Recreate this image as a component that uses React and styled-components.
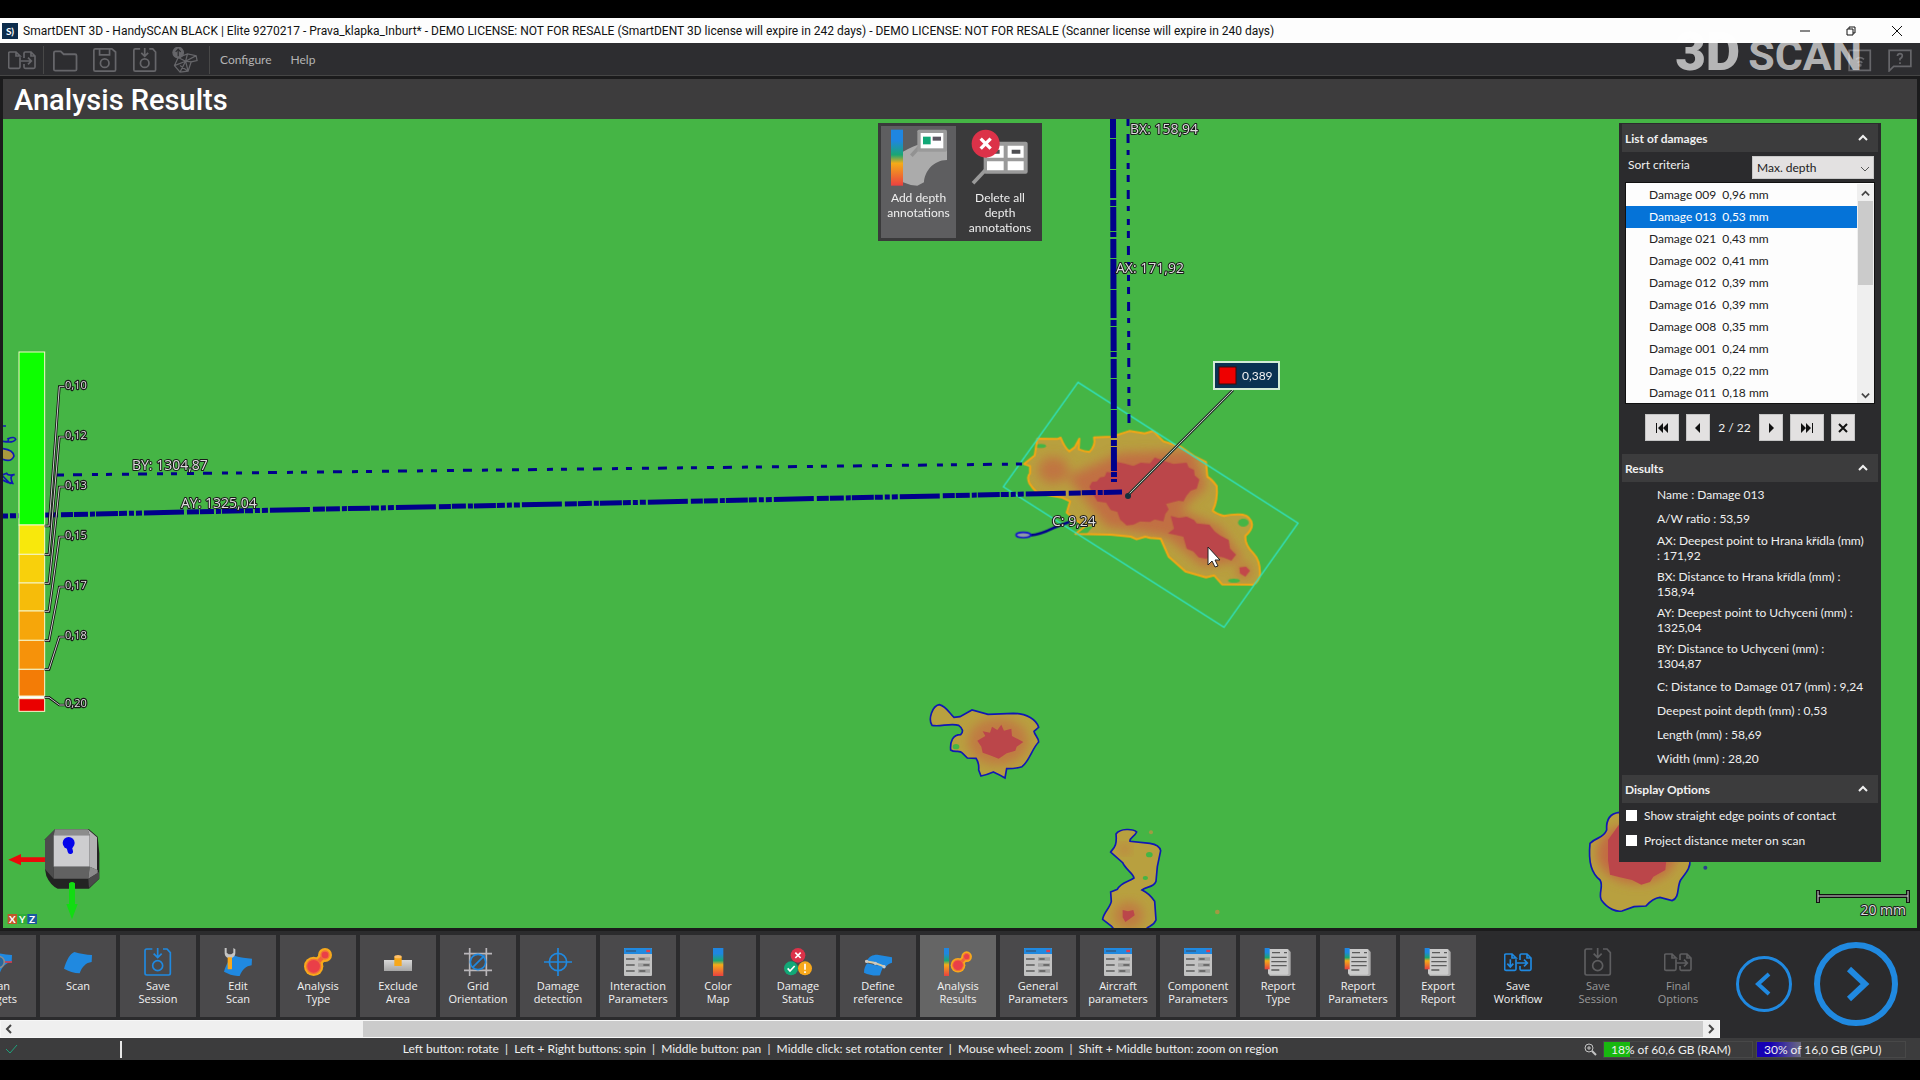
import React, { useState } from 'react';
import styled, { createGlobalStyle } from 'styled-components';

const GlobalStyle = createGlobalStyle`
  * {
    box-sizing: border-box;
  }
  html, body, #root {
    height: 100%;
  }
  body {
    margin: 0;
    background: #000;
    color: #f0f0f0;
    font-family: Lato, 'Open Sans', 'Liberation Sans', sans-serif;
    font-size: 12px;
  }
  button {
    font-family: inherit;
    border: 0;
    padding: 0;
    background: none;
    color: inherit;
  }
  ul {
    list-style: none;
    margin: 0;
    padding: 0;
  }
`;

const Window = styled.div`
  position: relative;
  display: flex;
  flex-direction: column;
  min-height: 100vh;
  padding: 18px 0 20px;
`;

/* ---------- title bar ---------- */

const TitleBar = styled.header`
  display: flex;
  align-items: center;
  height: 25px;
  padding-left: 2px;
  background: #fdfdfd;
  color: #111;
`;

const TitleText = styled.span`
  flex: 1;
  margin-left: 5px;
  font-family: Roboto, sans-serif;
  font-size: 12px;
  line-height: 16px;
  white-space: nowrap;
`;

const WindowButton = styled.button`
  display: grid;
  place-items: center;
  width: 46px;
  height: 25px;
`;

/* ---------- menu bar ---------- */

const MenuBar = styled.nav`
  display: flex;
  align-items: center;
  height: 33px;
  padding: 2px 5px 0 8px;
  background: #2d2d30;
  color: #b4b4b4;
  border-bottom: 1px solid #454545;
`;

const ToolButton = styled.button`
  display: grid;
  place-items: center;
  width: 28px;
  height: 28px;
  margin-right: ${(props) => props.$gap || 12}px;
`;

const Divider = styled.span`
  width: 1px;
  height: 28px;
  margin-right: ${(props) => props.$gap}px;
  background: #484848;
`;

const MenuItem = styled.button`
  margin-right: 19px;
  font-size: 12px;
  line-height: 16px;
`;

const Spacer = styled.span`
  flex: 1;
`;

const Watermark = styled.div`
  position: absolute;
  top: 27px;
  right: 58px;
  display: flex;
  align-items: baseline;
  gap: 8px;
  color: rgba(255, 255, 255, 0.65);
  font-family: Roboto, sans-serif;
  font-size: 43px;
  font-weight: 700;
  line-height: 50px;
  pointer-events: none;

  b {
    font-size: 53px;
    font-weight: 900;
  }
`;

/* ---------- main view ---------- */

const Main = styled.main`
  display: flex;
  flex: 1;
  flex-direction: column;
  padding: 3px 3px;
  background: #1b1b1c;
`;

const Heading = styled.h1`
  margin: 0;
  padding: 2px 11px 0;
  background: #3d3c3d;
  color: #fff;
  font-family: Roboto, sans-serif;
  font-size: 29px;
  font-weight: 500;
  line-height: 38px;
`;

const Viewport = styled.section`
  position: relative;
  display: flex;
  flex: 1;
  justify-content: flex-end;
  align-items: flex-start;
  padding: 4px 36px 20px;
  background: #45b545;
  overflow: hidden;
`;

const Scene = styled.svg`
  position: absolute;
  inset: 0;
  width: 100%;
  height: 100%;
`;

const Legend = styled.svg`
  position: absolute;
  left: 15px;
  top: 28%;
  margin-top: 4px;
`;

const Triad = styled.svg`
  position: absolute;
  left: 4px;
  bottom: 4px;
`;

const ScaleBar = styled.svg`
  position: absolute;
  right: 7px;
  bottom: 4px;
`;

const Tools = styled.div`
  position: absolute;
  top: 4px;
  left: 50%;
  display: flex;
  gap: 5px;
  margin-left: -82px;
  padding: 3px;
  background: #3a3a3b;
`;

const DepthTool = styled.button`
  display: flex;
  flex-direction: column;
  align-items: center;
  width: ${(props) => (props.$wide ? 78 : 75)}px;
  height: 112px;
  padding: 3px 4px;
  background: ${(props) => (props.$active ? '#5e5e60' : 'transparent')};
  font-size: 12px;
  line-height: 15px;

  svg {
    flex: none;
    margin-bottom: 3px;
  }
`;

const Callout = styled.g`
  rect:first-child {
    fill: #0a3252;
    stroke: #d3ecd6;
    stroke-width: 2;
  }
`;

/* ---------- side panel ---------- */

const Panel = styled.aside`
  position: relative;
  width: 262px;
  padding: 1px 3px 1px;
  background: #2b2b2d;
`;

const SectionTitle = styled.button`
  display: flex;
  align-items: center;
  justify-content: space-between;
  width: 100%;
  height: 28px;
  padding: 0 10px 0 3px;
  background: #3c3c3d;
  font-size: 12px;
  font-weight: 700;
`;

const SortRow = styled.div`
  display: flex;
  justify-content: space-between;
  padding: 4px 4px 3px 6px;
`;

const SortLabel = styled.label`
  line-height: 18px;
`;

const Picker = styled.span`
  position: relative;
  display: block;

  svg {
    position: absolute;
    right: 4px;
    top: 8px;
    pointer-events: none;
  }
`;

const Select = styled.select`
  width: 122px;
  height: 23px;
  padding: 0 4px;
  border: 1px solid #c8c8c8;
  border-radius: 0;
  background: #e3e1e1;
  color: #222;
  font-family: inherit;
  font-size: 12px;
  appearance: none;
`;

const ListBox = styled.div`
  display: flex;
  height: 222px;
  margin: 0 3px 10px;
  padding-top: 1px;
  background: #fdfdfd;
  border: 1px solid #111;
  overflow: hidden;
`;

const Damages = styled.ul`
  flex: 1;
  overflow: hidden;
`;

const DamageRow = styled.li`
  height: 22px;
  padding-left: 23px;
  background: ${(props) => (props.$selected ? '#0573d8' : 'transparent')};
  color: ${(props) => (props.$selected ? '#fff' : '#222')};
  line-height: 22px;
  cursor: default;

  span {
    margin-left: 6px;
  }
`;

const ListScroll = styled.div`
  display: flex;
  flex-direction: column;
  align-items: center;
  width: 17px;
  background: #efefef;

  button {
    width: 16px;
    height: 17px;
  }
  i {
    width: 15px;
    height: 84px;
    margin-bottom: auto;
    background: #cbcbcb;
  }
`;

const Pager = styled.div`
  display: flex;
  align-items: center;
  justify-content: center;
  gap: 7px;
  margin-bottom: 13px;

  span {
    width: 35px;
    text-align: center;
    white-space: nowrap;
  }
`;

const PagerButton = styled.button`
  display: grid;
  place-items: center;
  width: ${(props) => (props.$wide ? 34 : 24)}px;
  height: 27px;
  border: 1px solid #c4c4c4;
  background: #e3e1e1;
`;

const Results = styled.ul`
  margin-bottom: 5px;
  padding: 0 11px 0 35px;
`;

const Result = styled.li`
  display: flex;
  align-items: center;
  min-height: 24px;
  padding: 3px 0;
  line-height: 15px;
`;

const Options = styled.div`
  padding: 0 4px 8px;
`;

const Option = styled.label`
  display: flex;
  align-items: center;
  gap: 7px;
  height: 25px;

  input {
    width: 11px;
    height: 11px;
    margin: 0;
    background: #fff;
    appearance: none;
  }
  input:checked {
    box-shadow: inset 0 0 0 2px #fff;
    background: #0573d8;
  }
`;

/* ---------- workflow ---------- */

const Workflow = styled.footer`
  display: flex;
  justify-content: space-between;
  height: 107px;
  padding-right: 5px;
  background: #2b2b2d;
`;

const Steps = styled.div`
  display: flex;
  flex: 1;
  flex-direction: column;
  justify-content: space-between;
  max-width: 1720px;
  min-width: 0;
`;

const StepRow = styled.div`
  display: flex;
  gap: 4px;
  margin-left: -40px;
  padding-top: 4px;
`;

const Step = styled.button`
  display: flex;
  flex: none;
  flex-direction: column;
  align-items: center;
  width: 76px;
  height: 82px;
  padding-top: 13px;
  background: ${(props) => (props.$active ? '#656565' : props.$plain ? 'transparent' : '#4a494b')};
  color: ${(props) => (props.disabled ? '#9a9a9a' : '#f2f2f2')};
  font-family: 'Open Sans', sans-serif;
  font-size: 11px;
  line-height: 13px;
  white-space: pre-line;

  svg {
    flex: none;
    margin-bottom: 3px;
  }
`;

const StepScroll = styled.div`
  display: flex;
  align-items: center;
  height: 18px;
  border: 1px solid #f6f6f6;
  background: #efefef;

  button {
    display: grid;
    place-items: center;
    width: 16px;
    height: 16px;
  }
  i {
    flex: 1;
    height: 16px;
    margin-left: 346px;
    background: #cbcbcb;
  }
`;

const Paging = styled.div`
  display: flex;
  align-items: center;
  gap: 22px;
  padding: 0 17px 0 16px;
  height: 105px;
`;

const RoundButton = styled.button`
  display: grid;
  place-items: center;
  width: ${(props) => props.$size}px;
  height: ${(props) => props.$size}px;
  border: ${(props) => props.$ring}px solid #2089e0;
  border-radius: 50%;
`;

/* ---------- status bar ---------- */

const StatusBar = styled.div`
  display: flex;
  align-items: center;
  height: 22px;
  padding: 0 14px 0 5px;
  background: #3c3c3d;
`;

const Caret = styled.span`
  width: 2px;
  height: 17px;
  margin-left: 102px;
  background: #e8e8e8;
`;

const Hints = styled.p`
  flex: 1;
  margin: 0;
  padding-right: 24px;
  text-align: center;
  white-space: pre;
  line-height: 18px;
`;

const Meter = styled.span`
  width: 150px;
  height: 17px;
  margin-left: ${(props) => props.$gap}px;
  padding-left: 7px;
  border: 1px solid #484848;
  background: ${(props) => props.$fill} no-repeat;
  line-height: 15px;
  white-space: nowrap;
`;

/* ---------- icons ---------- */

const BLUE = '#2089e0';

const Icon = ({ size = 28, children, ...rest }) => (
  <svg width={size} height={size} viewBox='0 0 84 84' fill='none' aria-hidden='true' {...rest}>
    {children}
  </svg>
);

const HeatDefs = () => (
  <svg width='0' height='0' style={{ position: 'absolute' }} aria-hidden='true'>
    <defs>
      <linearGradient id='heat' x1='0' y1='0' x2='0' y2='1'>
        <stop offset='0.2' stopColor='#1f86e0' />
        <stop offset='0.45' stopColor='#1aa673' />
        <stop offset='0.6' stopColor='#f5ab18' />
        <stop offset='1' stopColor='#ea4040' />
      </linearGradient>
      <linearGradient id='metal' x1='0' y1='0' x2='0' y2='1'>
        <stop offset='0' stopColor='#d8d8d8' />
        <stop offset='1' stopColor='#a6a6a6' />
      </linearGradient>
    </defs>
  </svg>
);

const SHEET = 'M0 62 C7 38 17 18 31 12 C50 18 66 20 84 21 L83 42 C66 44 54 56 47 76 C30 76 14 70 0 62Z';

const ScanIcon = () => (
  <Icon>
    <path d={SHEET} fill={BLUE} />
  </Icon>
);

const TargetsIcon = () => (
  <Icon>
    <path d={SHEET} fill={BLUE} />
    <path d='M30 42 H84' stroke='#d83a4a' strokeWidth='5' />
    <circle cx='44' cy='42' r='17' fill='#28679c' stroke='#8c8c8c' strokeWidth='5' />
  </Icon>
);

const SaveSessionIcon = ({ color = BLUE, size, stroke = 5 }) => (
  <Icon size={size} stroke={color} strokeWidth={stroke}>
    <path d='M25 3 H8 Q3 3 3 8 V76 Q3 81 8 81 H74 Q79 81 79 76 V14 L69 3 H57' />
    <path d='M41 0 V27 M29 17 L41 29 L53 17' />
    <circle cx='41' cy='53' r='15' />
  </Icon>
);

const SaveIcon = ({ color }) => (
  <Icon size={24} stroke={color} strokeWidth='6'>
    <path d='M8 3 H66 L79 14 V76 Q79 81 74 81 H8 Q3 81 3 76 V8 Q3 3 8 3Z' />
    <path d='M23 3 V24 H58 V3' />
    <circle cx='41' cy='53' r='15' />
  </Icon>
);

const FolderIcon = ({ color }) => (
  <Icon size={25} stroke={color} strokeWidth='6'>
    <path d='M3 72 V16 Q3 11 8 11 H26 L36 21 H74 Q79 21 79 26 V72 Q79 76 74 76 H8 Q3 76 3 72Z' />
  </Icon>
);

const TransferIcon = ({ color, down, size }) => (
  <Icon size={size} stroke={color} strokeWidth='5'>
    <path d='M36 34 V63 Q36 67 32 67 H6 Q2 67 2 63 V22 Q2 18 6 18 H24 L36 30 H24 V18' />
    <path d='M48 36 V22 Q48 18 52 18 H69 L81 30 V63 Q81 67 77 67 H52 Q48 67 48 63 V54 M69 18 V30 H81' />
    <path d='M38 45 H69 M60 35 L70 45 L60 55' />
    {down && <path d='M19 34 V56 M10 47 L19 57 L28 47' />}
  </Icon>
);

const MeshIcon = ({ color }) => (
  <Icon size={26} stroke={color} strokeWidth='4'>
    <path d='M20 34 L50 22 L78 28 L81 44 L62 48 L52 78 L26 81 L8 60 Z M50 22 L44 46 L62 48 M44 46 L20 34 M44 46 L8 60 M44 46 L26 81 M44 46 L52 78 M78 28 L44 46 M26 60 L52 78' />
    <circle cx='20' cy='18' r='17' fill={color} />
    <path d='M20 30 V8 M12 16 L20 7 L28 16' stroke='#2d2d30' />
  </Icon>
);

const EditScanIcon = () => (
  <Icon>
    <g transform='translate(0 12) scale(1 0.95)'>
      <path d={SHEET} fill={BLUE} />
    </g>
    <path d='M2 0 V16 Q3 27 12 30 H23 Q33 27 34 16 V4 L28 0 V14 L22 19 H14 L8 14 V0 Z' fill='#c4c4c4' />
    <rect x='11' y='28' width='13' height='36' rx='2' fill='#f7a81c' />
  </Icon>
);

const Blob = () => (
  <>
    <path d='M30 54 L63 21' stroke='#f7a81c' strokeWidth='26' />
    <circle cx='29' cy='55' r='29' fill='#f7a81c' />
    <circle cx='63' cy='21' r='21' fill='#f7a81c' />
    <path d='M30 54 L63 21' stroke='#f0643a' strokeWidth='12' />
    <circle cx='29' cy='55' r='21' fill='#ea3f48' stroke='#f0703a' strokeWidth='4' />
    <circle cx='63' cy='21' r='12' fill='#ea3f48' stroke='#f0703a' strokeWidth='4' />
  </>
);

const AnalysisTypeIcon = () => (
  <Icon>
    <Blob />
  </Icon>
);

const AnalysisResultsIcon = () => (
  <Icon>
    <g transform='translate(20 10) scale(0.76)'>
      <Blob />
    </g>
    <rect width='15' height='84' fill='url(#heat)' />
  </Icon>
);

const ExcludeIcon = () => (
  <Icon>
    <rect y='36' width='84' height='33' fill='url(#metal)' />
    <rect x='31' y='26' width='22' height='28' fill='#f7a81c' />
    <ellipse cx='42' cy='26' rx='11' ry='5' fill='#ffc06a' />
  </Icon>
);

const GridIcon = () => (
  <Icon strokeWidth='5'>
    <path d='M17 0 V84 M67 0 V84 M0 17 H84 M0 67 H84' stroke='#b9b6ba' />
    <circle cx='42' cy='42' r='23' stroke={BLUE} />
    <path d='M26 58 L62 22' stroke={BLUE} />
  </Icon>
);

const DetectionIcon = () => (
  <Icon stroke={BLUE} strokeWidth='5'>
    <circle cx='42' cy='42' r='26' />
    <path d='M42 0 V84 M0 42 H84' />
  </Icon>
);

const FormIcon = () => (
  <Icon>
    <rect width='84' height='84' rx='3' fill='#c2c2c2' />
    <path d='M0 18 V3 Q0 0 3 0 H81 Q84 0 84 3 V18Z' fill={BLUE} />
    <path d='M6 9 H36' stroke='#35567c' strokeWidth='4' />
    <path d='M67 9 H78' stroke='#e03a4c' strokeWidth='7' />
    <path d='M42 33 H78 M42 51 H78 M42 69 H78' stroke='#a2a2a2' strokeWidth='11' />
    <path d='M6 33 H32 M6 51 H32 M6 69 H32 M46 33 H62 M58 51 H76 M46 69 H64' stroke='#5b5b5b' strokeWidth='4' />
  </Icon>
);

const ColorMapIcon = () => (
  <Icon>
    <rect x='27' width='31' height='84' fill='url(#heat)' />
  </Icon>
);

const StatusIcon = () => (
  <Icon stroke='#fff' strokeWidth='5'>
    <circle cx='42' cy='22' r='22' fill='#dc3249' stroke='none' />
    <circle cx='21' cy='61' r='21' fill='#12a877' stroke='none' />
    <circle cx='63' cy='61' r='21' fill='#f7a81c' stroke='none' />
    <path d='M34 14 L50 30 M50 14 L34 30' />
    <path d='M11 61 L18 69 L32 54' />
    <path d='M63 47 V65 M63 70 V75' />
  </Icon>
);

const ReferenceIcon = () => (
  <Icon>
    <path d='M8 38 C16 26 24 20 40 20 L84 28 V44 C76 46 66 52 62 62 Z' fill={BLUE} />
    <path d='M0 74 C0 62 4 52 10 46 L58 56 C54 64 50 74 48 82 C30 84 14 80 0 74Z' fill={BLUE} />
    <path d='M4 40 L30 44 L62 56' stroke='#d9c9a0' strokeWidth='6' />
    <g fill='#c8c8c8'>
      <circle cx='8' cy='40' r='5' />
      <circle cx='34' cy='46' r='5' />
      <circle cx='60' cy='56' r='5' />
    </g>
  </Icon>
);

const ReportIcon = () => (
  <Icon>
    <path d='M12 3 H72 L80 12 V79 Q80 84 75 84 H18 L12 77Z' fill='#adadad' />
    <path d='M12 3 H68 Q73 3 73 8 V76 Q73 80 69 80 H18 L12 74Z' fill='#cbcbcb' />
    <rect x='2' y='0' width='15' height='64' fill='url(#heat)' />
    <path d='M24 14 H48 M60 14 H69 M22 28 H68 M22 41 H68 M22 53 H68 M22 66 H46' stroke='#5b5b5b' strokeWidth='4' />
  </Icon>
);

const AddDepthIcon = () => (
  <svg width='58' height='58' viewBox='0 0 174 174' aria-hidden='true'>
    <rect x='3' y='2' width='36' height='168' fill='url(#heat)' />
    <path d='M39 68 C60 56 78 48 94 44 L171 62 V93 C128 94 104 128 102 160 L82 170 Q60 170 39 160Z' fill='#ababab' />
    <path d='M64 80 L90 52' stroke='#929292' strokeWidth='11' />
    <rect x='82' y='2' width='89' height='66' rx='5' fill='#9a9a9a' />
    <rect x='92' y='12' width='68' height='46' fill='#fff' />
    <rect x='99' y='23' width='23' height='23' fill='#12a877' />
    <rect x='128' y='23' width='25' height='12' fill='#5b5560' />
  </svg>
);

const DeleteDepthIcon = () => (
  <svg width='58' height='58' viewBox='0 0 174 174' aria-hidden='true'>
    <path d='M6 163 L44 122' stroke='#9a9a9a' strokeWidth='11' />
    <rect x='38' y='38' width='132' height='96' rx='6' fill='#9a9a9a' />
    <path d='M48 50 H98 V86 H48Z M110 50 H158 V86 H110Z M48 97 H98 V124 H48Z M110 97 H158 V124 H110Z' fill='#fff' />
    <path d='M72 62 H86 V74 H72Z M122 62 H148 V74 H122Z' fill='#4e4e52' />
    <circle cx='44' cy='44' r='42' fill='#dc3249' />
    <path d='M29 29 L59 59 M59 29 L29 59' stroke='#fff' strokeWidth='10' />
  </svg>
);

const Chevron = ({ d, size = 10, color = '#444', width = 2 }) => (
  <svg width={size} height={size} viewBox='0 0 10 10' fill='none' stroke={color} strokeWidth={width} aria-hidden='true'>
    <path d={d} />
  </svg>
);

const UP = 'M1 7 L5 3 L9 7';
const DOWN = 'M1 3 L5 7 L9 3';
const LEFT = 'M7 1 L3 5 L7 9';
const RIGHT = 'M3 1 L7 5 L3 9';

const Glyph = ({ d }) => (
  <svg width='14' height='10' viewBox='0 0 14 10' fill='#111' aria-hidden='true'>
    <path d={d} />
  </svg>
);

/* ---------- scan view ---------- */

const Label = styled.text`
  fill: #dedede;
  stroke: #1a1a1a;
  stroke-width: 2px;
  stroke-linejoin: round;
  paint-order: stroke;
  font-family: 'Open Sans', sans-serif;
  font-size: ${(props) => props.$size || 14}px;
`;

const MAIN_OUTLINE =
  'M352 236 L412 237 L422 233 Q434 264 448 274 L464 262 L478 236 L476 268 Q492 274 508 276 Q528 256 522 232 L576 230 L628 213 L674 220 L700 213 Q716 230 730 244 L782 260 L822 288 L858 306 L862 350 Q874 356 890 378 Q894 420 878 452 Q890 462 912 468 Q940 462 968 464 Q992 468 996 494 Q996 510 976 528 Q974 554 1000 580 Q1020 600 1020 640 Q1018 664 1000 674 L906 673 L882 646 L858 652 L796 634 L746 590 L722 536 L690 534 L676 530 L650 538 L632 530 L572 524 L466 522 L494 500 L440 458 L450 424 L424 412 L366 402 Q350 404 328 370 Q320 350 330 340 L330 318 L312 312 L344 286 Z';

const SECOND_OUTLINE =
  'M118 74 C96 78 84 118 96 136 C120 142 150 128 176 136 C190 146 190 156 182 164 C158 164 150 184 152 210 C166 220 178 208 188 220 L202 234 L228 235 Q238 250 236 270 L243 288 Q262 284 280 276 Q298 284 315 294 L320 266 Q350 266 366 260 C388 244 396 206 416 186 C416 172 404 166 402 154 L416 142 C410 120 380 100 340 100 L264 103 L216 90 L180 110 L162 112 C148 100 140 80 118 74Z';

const THIRD_OUTLINE =
  'M648 462 C660 444 700 446 710 456 C704 470 688 472 690 484 L750 490 Q778 494 782 512 L772 560 L768 604 C760 624 740 618 726 630 Q748 640 764 664 L768 720 C760 740 744 738 738 748 L642 748 L634 738 L608 718 C610 698 630 684 634 664 L632 636 L652 628 C664 606 686 606 702 594 C700 580 676 568 668 548 L632 516 C640 504 652 500 648 462Z';

const FOURTH_OUTLINE =
  'M58 1087 C30 1090 18 1110 20 1140 C10 1166 -10 1160 -30 1180 C-36 1240 -24 1270 0 1290 C12 1310 -6 1330 4 1350 C24 1378 50 1386 66 1383 L102 1370 L138 1368 C150 1354 164 1344 180 1342 L216 1352 C240 1344 230 1310 242 1290 C256 1270 272 1256 270 1230 L262 1160 C230 1110 200 1090 150 1090 Z';

const ScanView = () => (
  <Scene viewBox='3 119 1914 809' preserveAspectRatio='xMidYMid slice' role='img' aria-label='Scan with depth map'>
    <defs>
      <filter id='soft' x='-30%' y='-30%' width='160%' height='160%'>
        <feGaussianBlur stdDeviation='16' />
      </filter>
      <clipPath id='mainClip'>
        <path d={MAIN_OUTLINE} />
      </clipPath>
      <clipPath id='secondClip'>
        <path d={SECOND_OUTLINE} />
      </clipPath>
      <clipPath id='thirdClip'>
        <path d={THIRD_OUTLINE} />
      </clipPath>
      <clipPath id='fourthClip'>
        <path d={FOURTH_OUTLINE} />
      </clipPath>
    </defs>

    {/* main damage */}
    <g transform='translate(920 360) scale(0.33333)'>
      <g clipPath='url(#mainClip)'>
        <path d={MAIN_OUTLINE} fill='#b8a03f' />
        <g filter='url(#soft)' fill='#c26a42'>
          <ellipse cx='400' cy='330' rx='46' ry='40' opacity='0.8' />
          <path d='M440 350 L600 280 L820 270 L860 380 L780 450 L900 500 L970 600 L850 620 L740 530 L560 500Z' opacity='0.9' />
          <circle cx='972' cy='634' r='20' />
        </g>
        <g fill='#44b545'>
          <ellipse cx='970' cy='488' rx='16' ry='12' />
          <ellipse cx='942' cy='662' rx='18' ry='6' />
          <ellipse cx='362' cy='258' rx='16' ry='6' />
          <path d='M476 505 L520 498 L500 522 H470Z' />
        </g>
        <path
          d='M508 380 L516 366 L530 364 L540 352 L554 350 L560 336 L576 338 L574 318 L590 306 L612 310 L640 318 L662 308 L690 310 L704 292 L736 304 L760 312 L800 308 L806 322 L822 330 L824 346 L838 358 L830 386 L812 392 L800 406 L790 424 L776 422 L738 432 L746 448 L736 462 L730 484 L704 478 L690 486 L660 484 L640 494 L620 496 L600 478 L592 456 L572 450 L558 428 L532 424 L520 404Z'
          fill='#bb464a'
        />
        <path
          d='M752 468 L776 474 L800 470 L822 480 L830 490 L868 494 L884 514 L900 526 L926 540 L930 566 L948 584 L934 602 L910 592 L880 586 L858 596 L836 592 L820 574 L800 566 L790 530 L764 524 L744 520 L762 506Z'
          fill='#bb464a'
        />
        <path d='M958 622 L978 620 L990 632 L976 650 L960 640Z' fill='#c2484a' />
      </g>
      <path d={MAIN_OUTLINE} fill='none' stroke='#f5a614' strokeWidth='6' strokeLinejoin='round' />
      <path d='M474 67 L1134 489 L912 802 L250 380 Z' fill='none' stroke='#2fe3c3' strokeWidth='4' />
      <path d='M330 526 Q360 524 400 504 L448 486' fill='none' stroke='#00008b' strokeWidth='8' />
      <ellipse cx='310' cy='525' rx='22' ry='8' fill='#8f9ba6' stroke='#1414cc' strokeWidth='5' />
    </g>

    {/* neighbouring damages */}
    <g transform='translate(900 680) scale(0.33333)'>
      <g clipPath='url(#secondClip)'>
        <path d={SECOND_OUTLINE} fill='#b8a03f' />
        <ellipse cx='294' cy='184' rx='90' ry='70' fill='#c07a42' filter='url(#soft)' />
        <ellipse cx='168' cy='200' rx='10' ry='8' fill='#44b545' />
        <path
          d='M232 182 L256 168 L248 154 L270 158 L276 140 L292 150 L304 134 L312 152 L334 146 L336 168 L370 186 L350 200 L346 212 L320 220 L296 236 L270 226 L248 218 L244 200Z'
          fill='#bb464a'
        />
      </g>
      <path d={SECOND_OUTLINE} fill='none' stroke='#1018b4' strokeWidth='5' />
      <g clipPath='url(#thirdClip)'>
        <path d={THIRD_OUTLINE} fill='#b8a03f' />
        <ellipse cx='674' cy='508' rx='16' ry='14' fill='#c07a42' filter='url(#soft)' />
        <ellipse cx='686' cy='706' rx='44' ry='40' fill='#c07a42' filter='url(#soft)' />
        <path d='M668 690 L684 694 L700 690 L704 706 L690 716 L676 726 L668 712Z' fill='#bb464a' />
        <ellipse cx='748' cy='524' rx='10' ry='8' fill='#44b545' />
        <ellipse cx='736' cy='594' rx='8' ry='6' fill='#44b545' />
      </g>
      <path d={THIRD_OUTLINE} fill='none' stroke='#1018b4' strokeWidth='5' />
      <circle cx='753' cy='457' r='6' fill='#a09a42' />
      <circle cx='952' cy='696' r='7' fill='#a09a42' />
    </g>
    <g transform='translate(1600 450) scale(0.33333)'>
      <g clipPath='url(#fourthClip)'>
        <path d={FOURTH_OUTLINE} fill='#b8a03f' />
        <ellipse cx='110' cy='1210' rx='120' ry='90' fill='#c26a42' filter='url(#soft)' />
        <path
          d='M24 1170 L60 1120 L180 1120 L200 1220 L196 1260 L160 1280 L150 1296 L124 1304 L96 1290 L60 1282 L30 1274 L24 1230Z'
          fill='#bb464a'
        />
      </g>
      <path d={FOURTH_OUTLINE} fill='none' stroke='#1018b4' strokeWidth='5' />
      <circle cx='316' cy='1253' r='6' fill='#2a3d90' />
    </g>

    {/* loose contours at the left edge */}
    <g transform='translate(0 330) scale(0.33333)' fill='none' stroke='#1018b4' strokeWidth='5'>
      <path d='M8 288 H18 M8 334 Q40 340 47 328 Q44 318 24 326 Q30 338 8 334' />
      <path d='M8 356 Q40 360 42 378 Q34 398 8 388' fill='#a89a3e' />
      <path d='M8 434 L20 430 Q24 438 44 434 Q26 436 38 460 Q20 458 8 450 M8 438 L32 462' />
    </g>

    {/* distance lines */}
    <g stroke='#00008b'>
      <path d='M1113 119 L1114 482' strokeWidth='6' strokeDasharray='19 1 30 1 28 2 6 1 24 1 5 2' />
      <path d='M1128 119 L1129 430' strokeWidth='3' strokeDasharray='7 8 9 7 5 8 6 6' />
      <path d='M3 516 L1122 492' strokeWidth='5' strokeDasharray='5 2 6 2 40 3 12 1 14 2 5 1 22 1 8 2' />
      <path d='M57 475 L1022 464' strokeWidth='3' strokeDasharray='7 9 9 10 6 8 6 10' />
    </g>

    <Label x='1130' y='134'>BX: 158,94</Label>
    <Label x='1116' y='273'>AX: 171,92</Label>
    <Label x='132' y='470'>BY: 1304,87</Label>
    <Label x='181' y='508'>AY: 1325,04</Label>
    <Label x='1052' y='526'>C: 9,24</Label>

    {/* depth annotation */}
    <path d='M1233 390 L1128 495' stroke='#2c3c34' strokeWidth='3' />
    <path d='M1233 390 L1128 495' stroke='#b9c4b4' strokeWidth='1' />
    <circle cx='1128' cy='496' r='3' fill='#14303c' />
    <Callout>
      <rect x='1214' y='362' width='65' height='27' />
      <rect x='1219' y='367' width='17' height='17' fill='#ee0000' stroke='#3c0a0a' />
      <text x='1242' y='380' fontSize='12' fill='#f2f2f2'>0,389</text>
    </Callout>

    <path d='M1208 547 V565 L1212 561 L1215 567 L1218 566 L1215 560 H1220 Z' fill='#fff' stroke='#222' strokeWidth='1' />
  </Scene>
);

const legendBands = [
  { y: 66, h: 519, color: '#0dff00' },
  { y: 585, h: 88, color: '#f8e80c' },
  { y: 673, h: 86, color: '#f8d00c' },
  { y: 759, h: 84, color: '#f6bc0a' },
  { y: 843, h: 88, color: '#f6a60a' },
  { y: 931, h: 87, color: '#f6920a' },
  { y: 1018, h: 80, color: '#f37c06' },
  { y: 1106, h: 38, color: '#ea0000' },
];

const legendMarks = [
  { from: 588, to: 170, text: '0,10' },
  { from: 674, to: 321, text: '0,12' },
  { from: 760, to: 471, text: '0,13' },
  { from: 844, to: 621, text: '0,15' },
  { from: 932, to: 771, text: '0,17' },
  { from: 1018, to: 921, text: '0,18' },
  { from: 1102, to: 1125, text: '0,20' },
];

const DepthLegend = () => (
  <Legend width='76' height='366' viewBox='54 60 228 1098' role='img' aria-label='Depth legend'>
    <rect x='57' y='66' width='77' height='1078' fill='#fff' />
    {legendBands.map((band) => (
      <rect key={band.y} x='57' y={band.y} width='77' height={band.h} fill={band.color} stroke='#f3f6c8' strokeWidth='3' />
    ))}
    {legendMarks.map((mark) => {
      const d = `M134 ${mark.from} H147 L178 ${mark.to} H194`;
      return (
        <g key={mark.text} fill='none'>
          <path d={d} stroke='#111' strokeWidth='8' />
          <path d={d} stroke='#ccc' strokeWidth='3' />
        </g>
      );
    })}
    {legendMarks.map((mark) => (
      <Label key={mark.text} x='195' y={mark.to + 7} $size={33} style={{ strokeWidth: 7 }}>
        {mark.text}
      </Label>
    ))}
  </Legend>
);

const AxisTriad = () => (
  <Triad width='98' height='96' viewBox='20 54 294 288' role='img' aria-label='Orientation'>
    <path d='M136 142 H62 V132 L24 149 L62 166 V156 H136Z' fill='#ea0a0a' />
    <path d='M164 58 H266 L292 80 L297 130 V206 L266 236 H172 Q150 226 138 198 L134 178 V88Z' fill='#232323' />
    <path d='M164 58 L134 88 V178 L160 206 V76Z' fill='#4c4c4c' />
    <path d='M164 58 H262 L268 76 H160Z' fill='#8c8c8c' />
    <path d='M160 76 H268 V170 H160Z' fill='#cdcdcf' />
    <path d='M262 58 L290 82 V180 L268 170 V76Z' fill='#b2b2b4' />
    <path d='M160 170 H268 L264 206 H160Z' fill='#626262' />
    <path d='M268 170 L292 180 V190 L264 206Z' fill='#8a8a8a' />
    <path d='M264 206 L296 186 V206 L266 234Z' fill='#4a4a4a' />
    <circle cx='205' cy='99' r='18' fill='#0505ea' />
    <path d='M205 105 L210 124' stroke='#0505ea' strokeWidth='16' strokeLinecap='round' />
    <path d='M206 220 Q215 212 224 220 V282 H232 L215 328 L198 282 H206Z' fill='#12dc12' />
    <rect x='22' y='312' width='28' height='30' fill='#c0562a' />
    <rect x='52' y='312' width='28' height='30' fill='#2fae38' />
    <rect x='81' y='312' width='29' height='30' fill='#1b5a9e' />
    <g fill='#fff' fontSize='30' fontWeight='700' textAnchor='middle'>
      <text x='36' y='338'>X</text>
      <text x='66' y='338'>Y</text>
      <text x='95' y='338'>Z</text>
    </g>
  </Triad>
);

const DistanceScale = () => (
  <ScaleBar width='96' height='34' viewBox='0 0 96 34'>
    <path d='M4 0 V13 M94 0 V13 M4 6 H94' stroke='#111' strokeWidth='4' />
    <path d='M4 1 V12 M94 1 V12 M4 6 H94' stroke='#ddd' strokeWidth='1' />
    <Label x='92' y='25' textAnchor='end'>20 mm</Label>
  </ScaleBar>
);

/* ---------- data ---------- */

const damages = [
  ['Damage 009', '0,96 mm'],
  ['Damage 013', '0,53 mm'],
  ['Damage 021', '0,43 mm'],
  ['Damage 002', '0,41 mm'],
  ['Damage 012', '0,39 mm'],
  ['Damage 016', '0,39 mm'],
  ['Damage 008', '0,35 mm'],
  ['Damage 001', '0,24 mm'],
  ['Damage 015', '0,22 mm'],
  ['Damage 011', '0,18 mm'],
];

const results = [
  'Name : Damage 013',
  'A/W ratio : 53,59',
  'AX: Deepest point to Hrana křídla (mm) : 171,92',
  'BX: Distance to Hrana křídla (mm) : 158,94',
  'AY: Deepest point to Uchyceni (mm) : 1325,04',
  'BY: Distance to Uchyceni (mm) : 1304,87',
  'C: Distance to Damage 017 (mm) : 9,24',
  'Deepest point depth (mm) : 0,53',
  'Length (mm) : 58,69',
  'Width (mm) : 28,20',
];

const steps = [
  { label: 'Scan\nTargets', icon: <TargetsIcon /> },
  { label: 'Scan', icon: <ScanIcon /> },
  { label: 'Save\nSession', icon: <SaveSessionIcon /> },
  { label: 'Edit\nScan', icon: <EditScanIcon /> },
  { label: 'Analysis\nType', icon: <AnalysisTypeIcon /> },
  { label: 'Exclude\nArea', icon: <ExcludeIcon /> },
  { label: 'Grid\nOrientation', icon: <GridIcon /> },
  { label: 'Damage\ndetection', icon: <DetectionIcon /> },
  { label: 'Interaction\nParameters', icon: <FormIcon /> },
  { label: 'Color\nMap', icon: <ColorMapIcon /> },
  { label: 'Damage\nStatus', icon: <StatusIcon /> },
  { label: 'Define\nreference', icon: <ReferenceIcon /> },
  { label: 'Analysis\nResults', icon: <AnalysisResultsIcon />, active: true },
  { label: 'General\nParameters', icon: <FormIcon /> },
  { label: 'Aircraft\nparameters', icon: <FormIcon /> },
  { label: 'Component\nParameters', icon: <FormIcon /> },
  { label: 'Report\nType', icon: <ReportIcon /> },
  { label: 'Report\nParameters', icon: <ReportIcon /> },
  { label: 'Export\nReport', icon: <ReportIcon /> },
  { label: 'Save\nWorkflow', icon: <TransferIcon color={BLUE} down />, plain: true },
  { label: 'Save\nSession', icon: <SaveSessionIcon color='#5e5e60' />, plain: true, disabled: true },
  { label: 'Final\nOptions', icon: <TransferIcon color='#5e5e60' />, plain: true, disabled: true },
];

const Section = ({ title }) => (
  <SectionTitle>
    {title}
    <Chevron d={UP} color='#f0f0f0' />
  </SectionTitle>
);

export default function App() {
  const [selected, setSelected] = useState('Damage 013');
  const dim = '#66666a';

  return (
    <>
      <GlobalStyle />
      <HeatDefs />
      <Window>
        <TitleBar>
          <svg width='16' height='16' viewBox='0 0 16 16' aria-hidden='true'>
            <rect width='16' height='16' fill='#0c2c4c' />
            <text x='8' y='12' textAnchor='middle' fontSize='10' fontWeight='700' fill='#fff'>S)</text>
          </svg>
          <TitleText>
            SmartDENT 3D - HandySCAN BLACK | Elite 9270217 - Prava_klapka_Inburt* - DEMO LICENSE: NOT FOR RESALE (SmartDENT
            3D license will expire in 242 days) - DEMO LICENSE: NOT FOR RESALE (Scanner license will expire in 240 days)
          </TitleText>
          <WindowButton aria-label='Minimize'>
            <Chevron d='M0 5 H10' color='#111' width={1} />
          </WindowButton>
          <WindowButton aria-label='Restore'>
            <Chevron d='M1 3 H7 V9 H1Z M3 3 V1 H9 V7 H7' color='#111' width={1} />
          </WindowButton>
          <WindowButton aria-label='Close'>
            <Chevron d='M0 0 L10 10 M10 0 L0 10' color='#111' width={1} />
          </WindowButton>
        </TitleBar>

        <MenuBar>
          <ToolButton aria-label='Workflow' $gap={7}>
            <TransferIcon color={dim} />
          </ToolButton>
          <Divider $gap={7} />
          <ToolButton aria-label='Open'>
            <FolderIcon color={dim} />
          </ToolButton>
          <ToolButton aria-label='Save'>
            <SaveIcon color={dim} />
          </ToolButton>
          <ToolButton aria-label='Save session'>
            <SaveSessionIcon color={dim} size={24} stroke={6} />
          </ToolButton>
          <ToolButton aria-label='Export mesh' $gap={10}>
            <MeshIcon color={dim} />
          </ToolButton>
          <Divider $gap={10} />
          <MenuItem>Configure</MenuItem>
          <MenuItem>Help</MenuItem>
          <Spacer />
          <ToolButton aria-label='Connection'>
            <Icon size={24} stroke={dim} strokeWidth='6'>
              <path d='M4 8 H78 V78 H4Z' />
              <path d='M28 40 Q42 28 56 40 M34 52 Q42 44 50 52' />
              <circle cx='42' cy='60' r='3' />
            </Icon>
          </ToolButton>
          <ToolButton aria-label='Help' $gap={1}>
            <Icon size={24} stroke={dim} strokeWidth='6'>
              <path d='M4 80 V8 H80 V64 H20 Z' />
              <path d='M33 28 Q34 20 42 20 Q51 20 50 28 Q49 34 42 38 V44 M42 50 V56' />
            </Icon>
          </ToolButton>
        </MenuBar>

        <Main>
          <Heading>Analysis Results</Heading>
          <Viewport>
            <ScanView />
            <DepthLegend />
            <AxisTriad />
            <DistanceScale />

            <Tools>
              <DepthTool $active>
                <AddDepthIcon />
                Add depth annotations
              </DepthTool>
              <DepthTool $wide>
                <DeleteDepthIcon />
                Delete all depth annotations
              </DepthTool>
            </Tools>

            <Panel>
              <Section title='List of damages' />
              <SortRow>
                <SortLabel htmlFor='sort'>Sort criteria</SortLabel>
                <Picker>
                  <Select id='sort' defaultValue='depth'>
                    <option value='depth'>Max. depth</option>
                  </Select>
                  <Chevron d={DOWN} color='#555' width={1} />
                </Picker>
              </SortRow>
              <ListBox>
                <Damages role='listbox' aria-label='Damages'>
                  {damages.map(([name, depth]) => (
                    <DamageRow
                      key={name}
                      role='option'
                      aria-selected={name === selected}
                      $selected={name === selected}
                      onClick={() => setSelected(name)}
                    >
                      {name}
                      <span>{depth}</span>
                    </DamageRow>
                  ))}
                </Damages>
                <ListScroll>
                  <button aria-label='Scroll up'>
                    <Chevron d={UP} size={9} />
                  </button>
                  <i />
                  <button aria-label='Scroll down'>
                    <Chevron d={DOWN} size={9} />
                  </button>
                </ListScroll>
              </ListBox>
              <Pager>
                <PagerButton $wide aria-label='First'>
                  <Glyph d='M1 0 H2 V10 H1Z M8 0 V10 L3 5Z M13 0 V10 L8 5Z' />
                </PagerButton>
                <PagerButton aria-label='Previous'>
                  <Glyph d='M9 0 V10 L4 5Z' />
                </PagerButton>
                <span>2 / 22</span>
                <PagerButton aria-label='Next'>
                  <Glyph d='M5 0 V10 L10 5Z' />
                </PagerButton>
                <PagerButton $wide aria-label='Last'>
                  <Glyph d='M12 0 H13 V10 H12Z M1 0 V10 L6 5Z M6 0 V10 L11 5Z' />
                </PagerButton>
                <PagerButton aria-label='Remove'>
                  <Chevron d='M1 1 L9 9 M9 1 L1 9' color='#111' />
                </PagerButton>
              </Pager>

              <Section title='Results' />
              <Results>
                {results.map((line) => (
                  <Result key={line}>{line}</Result>
                ))}
              </Results>

              <Section title='Display Options' />
              <Options>
                <Option>
                  <input type='checkbox' />
                  Show straight edge points of contact
                </Option>
                <Option>
                  <input type='checkbox' />
                  Project distance meter on scan
                </Option>
              </Options>
            </Panel>
          </Viewport>
        </Main>

        <Workflow>
          <Steps>
            <StepRow>
              {steps.map((step, i) => (
                <Step key={i} $active={step.active} $plain={step.plain} disabled={step.disabled}>
                  {step.icon}
                  {step.label}
                </Step>
              ))}
            </StepRow>
            <StepScroll>
              <button aria-label='Scroll left'>
                <Chevron d={LEFT} />
              </button>
              <i />
              <button aria-label='Scroll right'>
                <Chevron d={RIGHT} />
              </button>
            </StepScroll>
          </Steps>
          <Paging>
            <RoundButton $size={56} $ring={3} aria-label='Previous step'>
              <svg width='24' height='24' viewBox='0 0 24 24' fill='none' stroke={BLUE} strokeWidth='4'>
                <path d='M17 2 L6 12 L17 22' />
              </svg>
            </RoundButton>
            <RoundButton $size={84} $ring={6} aria-label='Next step'>
              <svg width='36' height='36' viewBox='0 0 36 36' fill='none' stroke={BLUE} strokeWidth='6'>
                <path d='M11 3 L27 18 L11 33' />
              </svg>
            </RoundButton>
          </Paging>
        </Workflow>

        <StatusBar>
          <svg width='13' height='10' viewBox='0 0 13 10' fill='none' stroke='#1fa37c' strokeWidth='1' aria-hidden='true'>
            <path d='M1 5 L5 9 L12 1' />
          </svg>
          <Caret />
          <Hints>
            {[
              'Left button: rotate',
              'Left + Right buttons: spin',
              'Middle button: pan',
              'Middle click: set rotation center',
              'Mouse wheel: zoom',
              'Shift + Middle button: zoom on region',
            ].join('  |  ')}
          </Hints>
          <svg width='14' height='14' viewBox='0 0 14 14' fill='none' stroke='#c4c4c4' aria-hidden='true'>
            <circle cx='6' cy='6' r='4' />
            <path d='M4 6 H8 M6 4 V8' />
            <path d='M9 9 L13 13' strokeWidth='2' />
          </svg>
          <Meter $gap={6} $fill='linear-gradient(#18b80f, #18b80f) 0 0 / 26px 100%'>
            18% of 60,6 GB (RAM)
          </Meter>
          <Meter $gap={3} $fill='linear-gradient(90deg, #1600b4 30%, #6c6c80) 0 0 / 44px 100%'>
            30% of 16,0 GB (GPU)
          </Meter>
        </StatusBar>

        <Watermark>
          <b>3D</b>
          <span>SCAN</span>
        </Watermark>
      </Window>
    </>
  );
}
